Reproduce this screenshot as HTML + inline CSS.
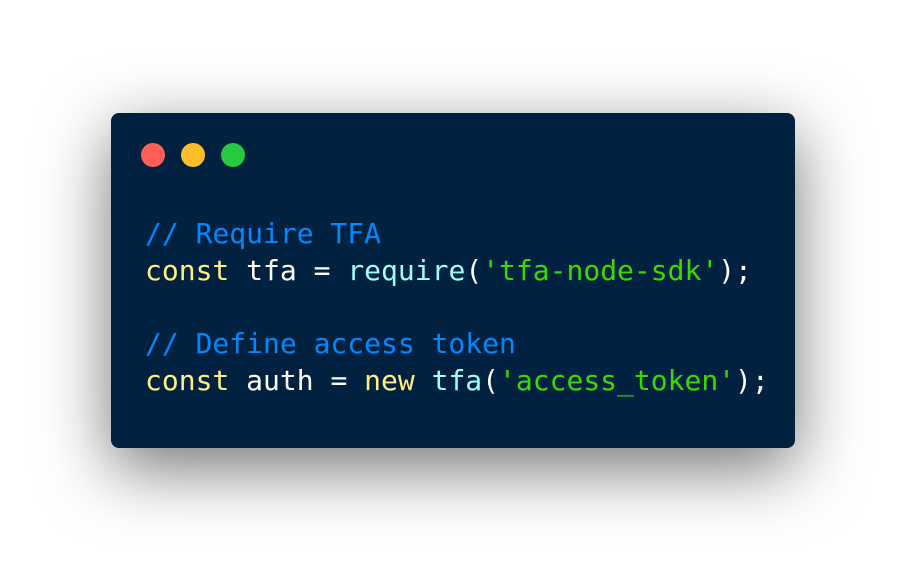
<!DOCTYPE html>
<html><head><style>
html,body{margin:0;padding:0;background:#fff;width:906px;height:562px;overflow:hidden}
.card{position:absolute;left:111px;top:113px;width:684px;height:335px;background:#002240;border-radius:8px;box-shadow:0 20px 68px rgba(0,0,0,0.55)}
.dot{position:absolute;top:143px;width:24px;height:24px;border-radius:50%}
pre{position:absolute;left:145px;top:216px;margin:0;font-family:"DejaVu Sans Mono","Liberation Mono",monospace;font-size:28px;line-height:36.7px;color:#fff}
.c{color:#0088ff}.k{color:#ffee80}.f{color:#9effff}.s{color:#3ad900}
</style></head><body>
<div class="card"></div>
<div class="dot" style="left:141px;background:#ff5f56"></div>
<div class="dot" style="left:181px;background:#ffbd2e"></div>
<div class="dot" style="left:221px;background:#27c93f"></div>
<pre><span class="c">// Require TFA</span>
<span class="k">const</span> tfa = <span class="f">require</span>(<span class="s">'tfa-node-sdk'</span>);

<span class="c">// Define access token</span>
<span class="k">const</span> auth = <span class="k">new</span> <span class="f">tfa</span>(<span class="s">'access_token'</span>);</pre>
</body></html>
